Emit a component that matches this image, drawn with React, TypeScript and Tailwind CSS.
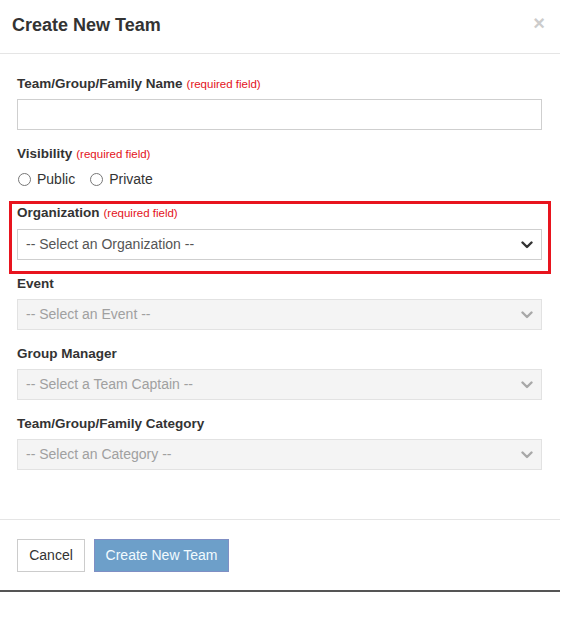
import React from "react";

function Chevron({ disabled }: { disabled?: boolean }) {
  return (
    <svg width="12" height="8" viewBox="0 0 12 8" className="shrink-0">
      <path
        d="M1.5 1.5 L6 6 L10.5 1.5"
        fill="none"
        stroke={disabled ? "#a8a8a8" : "#333"}
        strokeWidth="2.4"
        strokeLinecap="round"
        strokeLinejoin="round"
      />
    </svg>
  );
}

function Select({ text, disabled }: { text: string; disabled?: boolean }) {
  return (
    <div
      className={
        disabled
          ? "h-[31px] w-full border border-[#e2e2e2] bg-[#f4f4f4] flex items-center justify-between pl-[8px] pr-[8px] text-[14px] text-[#a0a0a0]"
          : "h-[31px] w-full border border-[#cfcfcf] bg-white flex items-center justify-between pl-[8px] pr-[8px] text-[14px] text-[#555]"
      }
    >
      <span>{text}</span>
      <Chevron disabled={disabled} />
    </div>
  );
}

function Label({ text, required }: { text: string; required?: boolean }) {
  return (
    <div className="h-[18px] leading-[18px] flex items-baseline gap-[4px]">
      <span className="text-[13.5px] font-bold text-[#333]">{text}</span>
      {required && <span className="text-[11.5px] text-[#e3131b]">(required field)</span>}
    </div>
  );
}

function Radio({ label }: { label: string }) {
  return (
    <div className="flex items-center gap-[6px]">
      <span className="w-[13px] h-[13px] rounded-full border border-[#777] bg-white" />
      <span className="text-[14px] text-[#333]">{label}</span>
    </div>
  );
}

export default function App() {
  return (
    <div
      className="w-[565px] h-[636px] bg-white"
      style={{ fontFamily: '"Liberation Sans", Arial, sans-serif' }}
    >
      <div className="w-[560px] bg-white border-b-[2px] border-[#555]">
        {/* header */}
        <div className="h-[54px] border-b border-[#e5e5e5] flex items-center justify-between pl-[12px] pr-[15px]">
          <span className="text-[18px] font-bold text-[#333] -mt-[2px]">Create New Team</span>
          <span className="text-[20px] font-bold text-[#cccccc] leading-none -mt-[8px]">×</span>
        </div>

        {/* body */}
        <div className="pl-[17px] pr-[18px] pt-[21px] pb-[49px]">
          <div className="mb-[15px]">
            <Label text="Team/Group/Family Name" required />
            <div className="mt-[6px] h-[31px] w-full border border-[#cfcfcf] bg-white" />
          </div>

          <div className="mb-[15px]">
            <Label text="Visibility" required />
            <div className="mt-[6px] h-[20px] flex items-center gap-[15px] pl-[1px]">
              <Radio label="Public" />
              <Radio label="Private" />
            </div>
          </div>

          <div className="relative mb-[15px]">
            <div className="absolute -top-[3px] -left-[8px] -right-[9px] -bottom-[14px] border-[3px] border-[#e8141e] pointer-events-none" />
            <Label text="Organization" required />
            <div className="mt-[7px]">
              <Select text="-- Select an Organization --" />
            </div>
          </div>

          <div className="mb-[15px]">
            <Label text="Event" />
            <div className="mt-[6px]">
              <Select text="-- Select an Event --" disabled />
            </div>
          </div>

          <div className="mb-[15px]">
            <Label text="Group Manager" />
            <div className="mt-[6px]">
              <Select text="-- Select a Team Captain --" disabled />
            </div>
          </div>

          <div>
            <Label text="Team/Group/Family Category" />
            <div className="mt-[6px]">
              <Select text="-- Select an Category --" disabled />
            </div>
          </div>
        </div>

        {/* footer */}
        <div className="border-t border-[#e5e5e5] pl-[17px] pt-[19px] pb-[18px] flex items-center gap-[9px]">
          <button className="h-[33px] w-[68px] border border-[#cccccc] bg-white text-[14px] text-[#333]">
            Cancel
          </button>
          <button className="h-[33px] w-[135px] border border-[#7f8fc4] bg-[#6d9fc9] text-[14px] text-[#f2fbff]">
            Create New Team
          </button>
        </div>
      </div>
    </div>
  );
}
